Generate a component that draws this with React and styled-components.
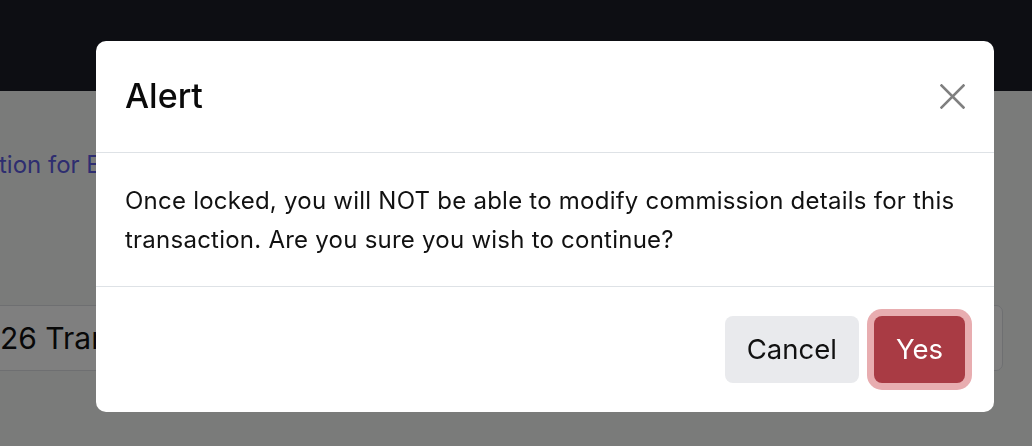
import React from "react";
import styled, { createGlobalStyle } from "styled-components";

const GlobalStyle = createGlobalStyle`
  html, body { margin: 0; padding: 0; }
  body {
    font-family: Inter, "Noto Sans", "Liberation Sans", sans-serif;
    background: #f5f7f5;
    color: #111;
    overflow: hidden;
  }
  * { box-sizing: border-box; }
`;

const Page = styled.div`
  width: 1032px;
  height: 446px;
  display: flex;
  flex-direction: column;
  overflow: hidden;
`;

const NavBar = styled.header`
  height: 91px;
  flex: none;
  background: #1a1c26;
`;

const Content = styled.main`
  display: flex;
  flex-direction: column;
  padding-top: 60px;
`;

const TitleLink = styled.a`
  font-size: 24px;
  line-height: 28px;
  color: #5c5ae0;
  text-decoration: none;
  white-space: nowrap;
  margin-left: -1px;
`;

const Card = styled.div`
  margin-top: 126px;
  margin-left: -20px;
  width: 1023px;
  height: 66px;
  background: #ffffff;
  border: 1px solid #dcdfe3;
  border-radius: 7px;
  display: flex;
  align-items: center;
  padding-left: 19px;
  font-size: 30px;
  color: #111;
  white-space: nowrap;
`;

const Backdrop = styled.div`
  position: fixed;
  inset: 0;
  background: rgba(0, 0, 0, 0.5);
  display: flex;
  align-items: flex-start;
  padding: 41px 0 0 96px;
`;

const Dialog = styled.div`
  width: 898px;
  height: 371px;
  background: #fff;
  border-radius: 10px;
  display: flex;
  flex-direction: column;
  overflow: hidden;
`;

const Header = styled.div`
  height: 112px;
  flex: none;
  display: flex;
  align-items: center;
  justify-content: space-between;
  padding: 0 29px;
  border-bottom: 1px solid #dee2e6;
`;

const Title = styled.h5`
  margin: 0;
  font-size: 34px;
  font-weight: 500;
  line-height: 1.2;
  color: #0a0a0a;
`;

const CloseButton = styled.button`
  width: 25px;
  height: 25px;
  padding: 0;
  border: 0;
  background: transparent;
  display: flex;
  align-items: center;
  justify-content: center;
  cursor: pointer;
`;

const Body = styled.div`
  height: 134px;
  flex: none;
  padding: 28px 29px 0;
  border-bottom: 1px solid #dee2e6;
  font-size: 24px;
  line-height: 39px;
  letter-spacing: 0.24px;
  color: #111;
`;

const Footer = styled.div`
  flex: 1;
  display: flex;
  align-items: center;
  justify-content: flex-end;
  gap: 15px;
  padding: 0 29px 1px;
`;

const Button = styled.button`
  height: 67px;
  padding: 0 22px;
  border: 0;
  border-radius: 8px;
  font-family: inherit;
  font-size: 27.5px;
  font-weight: 400;
  cursor: pointer;
  background: ${(p) => (p.$variant === "danger" ? "#a93b44" : "#e9eaed")};
  color: ${(p) => (p.$variant === "danger" ? "#fff" : "#111")};
  box-shadow: ${(p) => (p.$focused ? "0 0 0 7px #e8adb0" : "none")};
`;

export default function App() {
  return (
    <>
      <GlobalStyle />
      <Page>
        <NavBar />
        <Content>
          <TitleLink href="#">tion for Escrow</TitleLink>
          <Card>26 Transactions</Card>
        </Content>
      </Page>
      <Backdrop>
        <Dialog role="dialog">
          <Header>
            <Title>Alert</Title>
            <CloseButton aria-label="Close">
              <svg width="25" height="25" viewBox="0 0 25 25">
                <path d="M1.5 1.5 L23.5 23.5 M23.5 1.5 L1.5 23.5" stroke="#808080" strokeWidth="2.6" strokeLinecap="square" fill="none" />
              </svg>
            </CloseButton>
          </Header>
          <Body>
            Once locked, you will NOT be able to modify commission details for this transaction. Are you sure you wish to continue?
          </Body>
          <Footer>
            <Button>Cancel</Button>
            <Button $variant="danger" $focused>Yes</Button>
          </Footer>
        </Dialog>
      </Backdrop>
    </>
  );
}
